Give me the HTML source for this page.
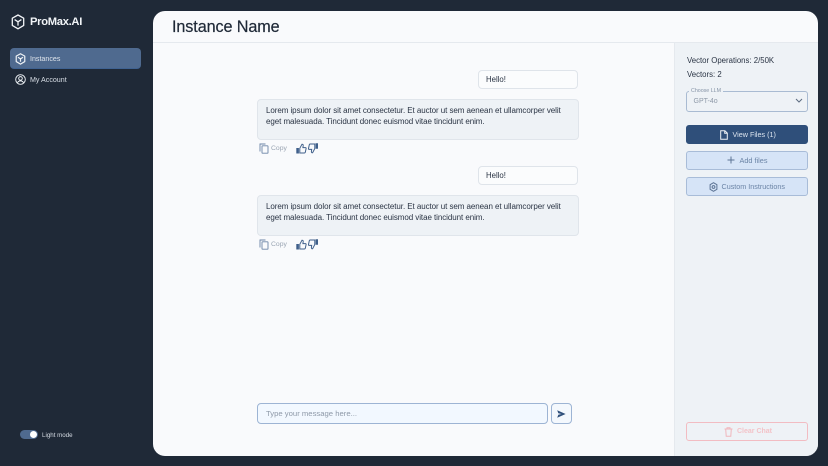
<!DOCTYPE html>
<html lang="en">
<head>
<meta charset="utf-8">
<title>ProMax.AI</title>
<style>
*{box-sizing:border-box;margin:0;padding:0}
html,body{width:828px;height:466px;overflow:hidden;background:#1f2937;font-family:"Liberation Sans",sans-serif}
.abs{position:absolute}
.t{position:absolute;white-space:nowrap;line-height:1}
svg{position:absolute;display:block;fill:none}
#main{position:absolute;left:153px;top:11px;width:665px;height:445px;background:#f9fafc;border-radius:12px;overflow:hidden}
#head{position:absolute;left:0;top:0;width:665px;height:32px;border-bottom:1px solid #e5e9ee}
#side{position:absolute;left:521px;top:32px;width:144px;height:413px;background:#eef2f6;border-left:1px solid #e5e9ee}
.user{position:absolute;left:478px;width:100px;height:19px;background:#fbfcfd;border:1px solid #dfe4ea;border-radius:4px;color:#2a3444;font-size:7.8px;line-height:17px;padding-left:7px}
.bot{position:absolute;left:257px;width:322px;height:41px;background:#eef2f6;border:1px solid #e0e5eb;border-radius:4px;color:#2a3444;font-size:8px;line-height:10.8px;padding:6px 0 0 8px;white-space:nowrap;letter-spacing:-.07px}
.btn{position:absolute;left:686px;width:122px;height:19px;border-radius:3px;border:1px solid #a8bcd8;background:#d6e4f7}
</style>
</head>
<body>
<!-- sidebar -->
<svg style="left:11px;top:14px" width="14" height="16" viewBox="0 0 14 16" stroke="#f3f5f8" stroke-width="1.3" stroke-linejoin="round"><path d="M7 1l5.700 3.200v7.200L7 14.800 1.300 11.400V4.200z"/><path d="M3.600 5.600L7 7.800l3.400-2.200M7 7.800v3.800"/></svg>
<div class="t" style="left:30px;top:17px;font-size:11.2px;font-weight:700;color:#f1f4f7;letter-spacing:-.3px">ProMax.AI</div>

<div class="abs" style="left:10px;top:48px;width:131px;height:21px;background:#4f6a8f;border-radius:4px;border-bottom:1px solid #3f6291"></div>
<svg style="left:15px;top:53px" width="11" height="12" viewBox="0 0 14 16" stroke="#eef2f6" stroke-width="1.6" stroke-linejoin="round"><path d="M7 1l5.700 3.200v7.200L7 14.800 1.300 11.400V4.200z"/><path d="M3.600 5.600L7 7.800l3.400-2.200M7 7.800v3.800"/></svg>
<div class="t" style="left:30px;top:56px;font-size:7.100px;color:#dfe5ec">Instances</div>

<svg style="left:14.500px;top:73.500px" width="11" height="11" viewBox="0 0 11 11" stroke="#eef2f6" stroke-width=".95"><circle cx="5.500" cy="5.500" r="4.800"/><circle cx="5.500" cy="4.400" r="1.800"/><path d="M2.400 9c.6-1.500 1.700-2.100 3.100-2.100S8 7.500 8.600 9"/></svg>
<div class="t" style="left:30px;top:77px;font-size:7.100px;color:#d8dee6">My Account</div>

<div class="abs" style="left:20px;top:430px;width:18px;height:9px;border-radius:5px;background:#4f6a8f"></div>
<div class="abs" style="left:30px;top:431px;width:7px;height:7px;border-radius:50%;background:#fff"></div>
<div class="t" style="left:42px;top:432.500px;font-size:6.200px;color:#d5dbe3">Light mode</div>

<!-- main panel -->
<div id="main">
  <div id="head"></div>
  <div id="side"></div>
  <div class="t" style="left:19px;top:7.500px;font-size:16.200px;color:#1f2937;letter-spacing:-.1px;-webkit-text-stroke:.2px #1f2937">Instance Name</div>
</div>

<!-- messages -->
<div class="user" style="top:70px">Hello!</div>
<div class="bot" style="top:99px">Lorem ipsum dolor sit amet consectetur. Et auctor ut sem aenean et ullamcorper velit<br>eget malesuada. Tincidunt donec euismod vitae tincidunt enim.</div>

<svg style="left:259px;top:143px" width="10" height="11" viewBox="0 0 10 11" stroke="#6b84a6" stroke-width=".9"><path d="M1 8.500V1h5.500"/><rect x="3" y="2.800" width="6" height="7.400" rx=".5"/></svg>
<div class="t" style="left:271px;top:145.500px;font-size:6.800px;color:#9aa5b3">Copy</div>
<svg style="left:296px;top:143px" width="23" height="11" viewBox="0 0 23 11" stroke="#3f5f8a" stroke-width="1"><path d="M.8 5.500h1.600v4.500H.8z" fill="#3f5f8a"/><path d="M3.800 5.300L6 1.200c.9 0 1.300.6 1.200 1.400l-.3 2h2.500c.5 0 .8.400.7.900l-.8 3.800c-.1.400-.4.700-.8.700H3.800z"/><path d="M21.500.8h-1.400v4.500h1.400z" fill="#3f5f8a"/><path d="M18.800 5.500L16.600 9.800c-.9 0-1.300-.6-1.200-1.400l.3-2h-2.500c-.5 0-.8-.4-.7-.9l.8-3.800c.1-.4.400-.7.800-.7h4.700z"/></svg>

<div class="user" style="top:166px">Hello!</div>
<div class="bot" style="top:195px">Lorem ipsum dolor sit amet consectetur. Et auctor ut sem aenean et ullamcorper velit<br>eget malesuada. Tincidunt donec euismod vitae tincidunt enim.</div>

<svg style="left:259px;top:239px" width="10" height="11" viewBox="0 0 10 11" stroke="#6b84a6" stroke-width=".9"><path d="M1 8.500V1h5.500"/><rect x="3" y="2.800" width="6" height="7.400" rx=".5"/></svg>
<div class="t" style="left:271px;top:241.500px;font-size:6.800px;color:#9aa5b3">Copy</div>
<svg style="left:296px;top:239px" width="23" height="11" viewBox="0 0 23 11" stroke="#3f5f8a" stroke-width="1"><path d="M.8 5.500h1.600v4.500H.8z" fill="#3f5f8a"/><path d="M3.800 5.300L6 1.200c.9 0 1.300.6 1.200 1.400l-.3 2h2.500c.5 0 .8.400.7.900l-.8 3.800c-.1.400-.4.700-.8.700H3.800z"/><path d="M21.500.8h-1.400v4.500h1.400z" fill="#3f5f8a"/><path d="M18.800 5.500L16.600 9.800c-.9 0-1.300-.6-1.200-1.400l.3-2h-2.500c-.5 0-.8-.4-.7-.9l.8-3.800c.1-.4.400-.7.800-.7h4.700z"/></svg>

<!-- input -->
<div class="abs" style="left:257px;top:403px;width:291px;height:21px;background:#f2f8ff;border:1px solid #9db4d4;border-radius:4px"></div>
<div class="t" style="left:266px;top:409.500px;font-size:7.700px;color:#8e99a8">Type your message here...</div>
<div class="abs" style="left:551px;top:403px;width:21px;height:21px;background:#f4f8fd;border:1px solid #9db4d4;border-radius:4px"></div>
<svg style="left:557px;top:409.500px" width="9" height="8" viewBox="0 0 9 8"><path d="M.2.200L8.600 4 .2 7.800 1.300 4.800 4.500 4 1.300 3.200z" fill="#2f4f7a"/></svg>

<!-- right column -->
<div class="t" style="left:687px;top:57px;font-size:7.800px;color:#2a3444">Vector Operations: 2/50K</div>
<div class="t" style="left:687px;top:71px;font-size:7.800px;color:#2a3444">Vectors: 2</div>

<div class="abs" style="left:686px;top:91px;width:122px;height:21px;border:1px solid #a9bbd2;border-radius:3px"></div>
<div class="t" style="left:689px;top:88.500px;padding:0 2px;background:#eef2f6;font-size:5.300px;color:#8593a6">Choose LLM</div>
<div class="t" style="left:693.500px;top:98px;font-size:7px;color:#8e99a8">GPT-4o</div>
<svg style="left:795px;top:98px" width="8" height="6" viewBox="0 0 8 6" stroke="#5c6b80" stroke-width="1"><path d="M1 1l3 3 3-3"/></svg>

<div class="btn" style="top:125px;background:#2f4f7a;border-color:#2f4f7a"></div>
<svg style="left:720px;top:130px" width="8" height="10" viewBox="0 0 8 10" stroke="#eef2f6" stroke-width="1"><path d="M.7.700h4.200l2.400 2.400v6.200H.7zM4.700.700v2.600h2.600"/></svg>
<div class="t" style="left:732.500px;top:131px;font-size:7.200px;color:#dde5ef">View Files (1)</div>

<div class="btn" style="top:151px"></div>
<svg style="left:727px;top:156px" width="8" height="8" viewBox="0 0 8 8" stroke="#5c7394" stroke-width="1"><path d="M4 .5v7M.5 4h7"/></svg>
<div class="t" style="left:739.500px;top:157px;font-size:7.300px;color:#6b84a6">Add files</div>

<div class="btn" style="top:177px"></div>
<svg style="left:708.500px;top:181.500px" width="9" height="10" viewBox="0 0 9 10" stroke="#5c7394" stroke-width="1"><path d="M4.500.7l3.400 2v4.600l-3.400 2-3.400-2V2.700z"/><circle cx="4.500" cy="5" r="1.400"/></svg>
<div class="t" style="left:721.500px;top:183px;font-size:7.200px;color:#6b84a6">Custom Instructions</div>

<div class="abs" style="left:686px;top:422px;width:122px;height:19px;border:1px solid #f2bcc2;border-radius:3px"></div>
<svg style="left:724px;top:426.500px" width="9" height="10" viewBox="0 0 9 10" stroke="#f0b6bc" stroke-width="1"><path d="M.5 2h8M3 2V.7h3V2M1.700 2l.5 7.300h4.600L7.300 2"/></svg>
<div class="t" style="left:737px;top:428px;font-size:7px;font-weight:700;color:#f3c3c8">Clear Chat</div>
</body>
</html>
